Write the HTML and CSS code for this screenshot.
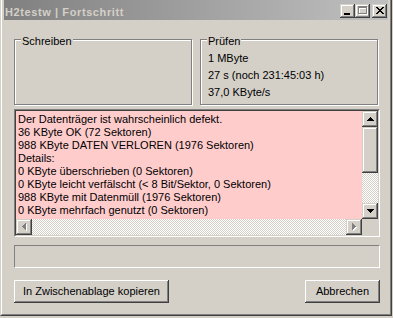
FILE: index.html
```html
<!DOCTYPE html>
<html>
<head>
<meta charset="utf-8">
<link rel="stylesheet" href="styles.css">
</head>
<body>
<div class="window">
  <div class="frame">
    <div class="titlebar">
      <span class="title">H2testw | Fortschritt</span>
      <div class="tbuttons">
        <span class="tbtn"><svg width="15" height="14" viewBox="0 0 15 14" shape-rendering="crispEdges"><rect x="4" y="9" width="6" height="2" fill="#000"/></svg></span>
        <span class="tbtn"><svg width="15" height="14" viewBox="0 0 15 14" shape-rendering="crispEdges"><g fill="#fff" transform="translate(1,1)"><rect x="3" y="2" width="9" height="2"/><rect x="3" y="4" width="1" height="6"/><rect x="11" y="4" width="1" height="6"/><rect x="3" y="9" width="9" height="1"/></g><g fill="#808080"><rect x="3" y="2" width="9" height="2"/><rect x="3" y="4" width="1" height="6"/><rect x="11" y="4" width="1" height="6"/><rect x="3" y="9" width="9" height="1"/></g></svg></span>
        <span class="tbtn close"><svg width="15" height="14" viewBox="0 0 15 14" shape-rendering="crispEdges"><g fill="#000" transform="translate(4,3)"><rect x="0" y="0" width="2" height="1"/><rect x="6" y="0" width="2" height="1"/><rect x="1" y="1" width="2" height="1"/><rect x="5" y="1" width="2" height="1"/><rect x="2" y="2" width="4" height="1"/><rect x="3" y="3" width="2" height="1"/><rect x="2" y="4" width="4" height="1"/><rect x="1" y="5" width="2" height="1"/><rect x="5" y="5" width="2" height="1"/><rect x="0" y="6" width="2" height="1"/><rect x="6" y="6" width="2" height="1"/></g></svg></span>
      </div>
    </div>
    <div class="client">
      <div class="groups">
        <div class="group"><span class="glabel">Schreiben</span></div>
        <div class="group">
          <span class="glabel">Prüfen</span>
          <div class="ginfo">
            <div>1 MByte</div>
            <div>27 s (noch 231:45:03 h)</div>
            <div>37,0 KByte/s</div>
          </div>
        </div>
      </div>
      <div class="listbox">
        <div class="listinner">
          <div class="text">
            <div>Der Datenträger ist wahrscheinlich defekt.</div>
            <div>36 KByte OK (72 Sektoren)</div>
            <div>988 KByte DATEN VERLOREN (1976 Sektoren)</div>
            <div>Details:</div>
            <div>0 KByte überschrieben (0 Sektoren)</div>
            <div>0 KByte leicht verfälscht (&lt; 8 Bit/Sektor, 0 Sektoren)</div>
            <div>988 KByte mit Datenmüll (1976 Sektoren)</div>
            <div>0 KByte mehrfach genutzt (0 Sektoren)</div>
          </div>
          <div class="vscroll">
            <span class="sbtn"><svg width="7" height="4" viewBox="0 0 7 4" shape-rendering="crispEdges"><g fill="#000"><rect x="3" y="0" width="1" height="1"/><rect x="2" y="1" width="3" height="1"/><rect x="1" y="2" width="5" height="1"/><rect x="0" y="3" width="7" height="1"/></g></svg></span>
            <span class="sbtn thumb"></span>
            <span class="track"></span>
            <span class="sbtn"><svg width="7" height="4" viewBox="0 0 7 4" shape-rendering="crispEdges"><g fill="#000"><rect x="0" y="0" width="7" height="1"/><rect x="1" y="1" width="5" height="1"/><rect x="2" y="2" width="3" height="1"/><rect x="3" y="3" width="1" height="1"/></g></svg></span>
          </div>
          <div class="hscroll">
            <span class="sbtn"><svg width="5" height="8" viewBox="0 0 5 8" shape-rendering="crispEdges"><g fill="#fff" transform="translate(1,1)"><rect x="0" y="3" width="1" height="1"/><rect x="1" y="2" width="1" height="3"/><rect x="2" y="1" width="1" height="5"/><rect x="3" y="0" width="1" height="7"/></g><g fill="#808080"><rect x="0" y="3" width="1" height="1"/><rect x="1" y="2" width="1" height="3"/><rect x="2" y="1" width="1" height="5"/><rect x="3" y="0" width="1" height="7"/></g></svg></span>
            <span class="track"></span>
            <span class="sbtn"><svg width="5" height="8" viewBox="0 0 5 8" shape-rendering="crispEdges"><g fill="#fff" transform="translate(1,1)"><rect x="0" y="0" width="1" height="7"/><rect x="1" y="1" width="1" height="5"/><rect x="2" y="2" width="1" height="3"/><rect x="3" y="3" width="1" height="1"/></g><g fill="#808080"><rect x="0" y="0" width="1" height="7"/><rect x="1" y="1" width="1" height="5"/><rect x="2" y="2" width="1" height="3"/><rect x="3" y="3" width="1" height="1"/></g></svg></span>
          </div>
          <div class="corner"></div>
        </div>
      </div>
      <div class="progress"></div>
      <div class="buttons">
        <button class="btn copy">In Zwischenablage kopieren</button>
        <button class="btn cancel">Abbrechen</button>
      </div>
    </div>
  </div>
</div>
</body>
</html>
```

FILE: styles.css
```css
* { box-sizing: border-box; }
html, body { margin: 0; padding: 0; }
body {
  width: 393px;
  height: 318px;
  overflow: hidden;
  background: #d4d0c8;
  font-family: "Liberation Sans", Arial, sans-serif;
  font-size: 11px;
  color: #000;
}
.window {
  width: 392px;
  height: 316px;
  background: #d4d0c8;
  border-left: 1px solid #d4d0c8;
  border-right: 1px solid #404040;
  border-bottom: 1px solid #404040;
}
.frame {
  height: 100%;
  border-left: 1px solid #fff;
  border-right: 1px solid #808080;
  border-bottom: 1px solid #808080;
  padding: 0 2px 2px 2px;
  display: flex;
  flex-direction: column;
}
.titlebar {
  height: 20px;
  flex: none;
  background: linear-gradient(to right, #808080, #c0c0c0);
  display: flex;
  justify-content: space-between;
  align-items: flex-start;
  padding: 0 1px 0 1px;
}
.title {
  font-weight: bold;
  color: #d4d0c8;
  letter-spacing: 0.6px;
  line-height: 14px;
  padding-top: 5px;
  white-space: nowrap;
}
.tbuttons {
  display: flex;
  padding-top: 4px;
}
.tbtn {
  width: 15px;
  height: 14px;
  display: block;
  background: #d4d0c8;
  box-shadow: inset -1px -1px #404040, inset 1px 1px #d4d0c8, inset -2px -2px #808080, inset 2px 2px #fff;
}
.tbtn svg { display: block; }
.tbtn.close { margin-left: 2px; }
.client {
  flex: 1;
  display: flex;
  flex-direction: column;
  padding-left: 10px;
}
.groups {
  display: flex;
  gap: 8px;
  margin-top: 19px;
}
.group {
  position: relative;
  width: 178px;
  height: 66px;
  border: 1px solid #808080;
  box-shadow: inset 1px 1px #fff, 1px 1px #fff;
}
.glabel {
  position: absolute;
  left: 6px;
  top: -5px;
  padding: 0 1px;
  line-height: 13px;
  background: #d4d0c8;
  white-space: nowrap;
}
.ginfo {
  padding: 10px 0 0 7px;
  line-height: 17px;
  white-space: nowrap;
}
.listbox {
  margin-top: 4px;
  width: 366px;
  height: 128px;
  border-top: 1px solid #808080;
  border-left: 1px solid #808080;
  border-right: 1px solid #fff;
  border-bottom: 1px solid #fff;
}
.listinner {
  height: 100%;
  border-top: 1px solid #404040;
  border-left: 1px solid #404040;
  border-right: 1px solid #d4d0c8;
  border-bottom: 1px solid #d4d0c8;
  display: grid;
  grid-template-columns: 1fr 16px;
  grid-template-rows: 1fr 16px;
}
.text {
  background: #ffcccc;
  padding: 2px 0 0 2px;
  line-height: 13px;
  white-space: nowrap;
  overflow: hidden;
}
.vscroll {
  display: flex;
  flex-direction: column;
}
.hscroll {
  display: flex;
}
.sbtn {
  flex: none;
  width: 16px;
  height: 16px;
  display: flex;
  align-items: center;
  justify-content: center;
  background: #d4d0c8;
  box-shadow: inset -1px -1px #404040, inset 1px 1px #d4d0c8, inset -2px -2px #808080, inset 2px 2px #fff;
}
.sbtn svg { display: block; }
.thumb { height: 46px; }
.track {
  flex: 1;
  background-color: #d4d0c8;
  background-image: conic-gradient(#d4d0c8 0 25%, #fff 0 50%, #d4d0c8 0 75%, #fff 0);
  background-size: 2px 2px;
}
.corner { background: #d4d0c8; }
.progress {
  margin-top: 8px;
  width: 366px;
  height: 23px;
  border-top: 1px solid #808080;
  border-left: 1px solid #808080;
  border-right: 1px solid #fff;
  border-bottom: 1px solid #fff;
}
.buttons {
  margin-top: 12px;
  width: 366px;
  display: flex;
  justify-content: space-between;
}
.btn {
  height: 23px;
  margin: 0;
  padding: 0;
  border: none;
  background: #d4d0c8;
  font-family: "Liberation Sans", Arial, sans-serif;
  font-size: 11px;
  color: #000;
  line-height: 23px;
  box-shadow: inset -1px -1px #404040, inset 1px 1px #fff, inset -2px -2px #808080, inset 2px 2px #d4d0c8;
}
.copy { width: 155px; }
.cancel { width: 75px; }
```
